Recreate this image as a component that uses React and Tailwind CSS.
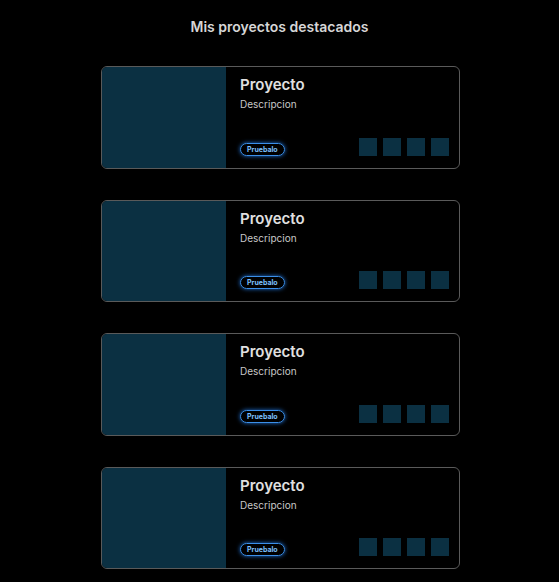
import React from 'react';

const ProjectCard = () => {
  return (
    <div className="flex h-[102.5px] w-[359px] overflow-hidden rounded-md border border-[#5a5a5a] bg-black">
      <div className="w-[124px] shrink-0 bg-[#0b3042]" />
      <div className="flex flex-1 flex-col pl-[14px] pr-[10px] pt-[8px] pb-[12px]">
        <h3 className="text-[15px] font-semibold leading-[20px] text-[#e0e0e0]">Proyecto</h3>
        <p className="mt-[2px] text-[10px] leading-[14px] text-[#c8c8c8]">Descripcion</p>
        <div className="mt-auto flex items-end justify-between">
          <button className="h-[13px] rounded-full border border-[#3b8fe8] px-[6px] text-[7px] font-bold leading-[11px] text-[#7cc0ff] shadow-[0_0_4px_#1f6fd1]">
            Pruebalo
          </button>
          <div className="flex gap-[6px]">
            {[0, 1, 2, 3].map((i) => (
              <div key={i} className="h-[18px] w-[18px] bg-[#0b3042]" />
            ))}
          </div>
        </div>
      </div>
    </div>
  );
};

export default function App() {
  return (
    <div className="min-h-[582px] bg-black pt-[17px] font-['Inter',sans-serif]">
      <h2 className="text-center text-[14px] font-semibold leading-[20px] text-[#d6d6d6]">
        Mis proyectos destacados
      </h2>
      <div className="mt-[29px] flex flex-col items-center gap-[31px] pl-[2px]">
        {[0, 1, 2, 3].map((i) => (
          <ProjectCard key={i} />
        ))}
      </div>
    </div>
  );
}
